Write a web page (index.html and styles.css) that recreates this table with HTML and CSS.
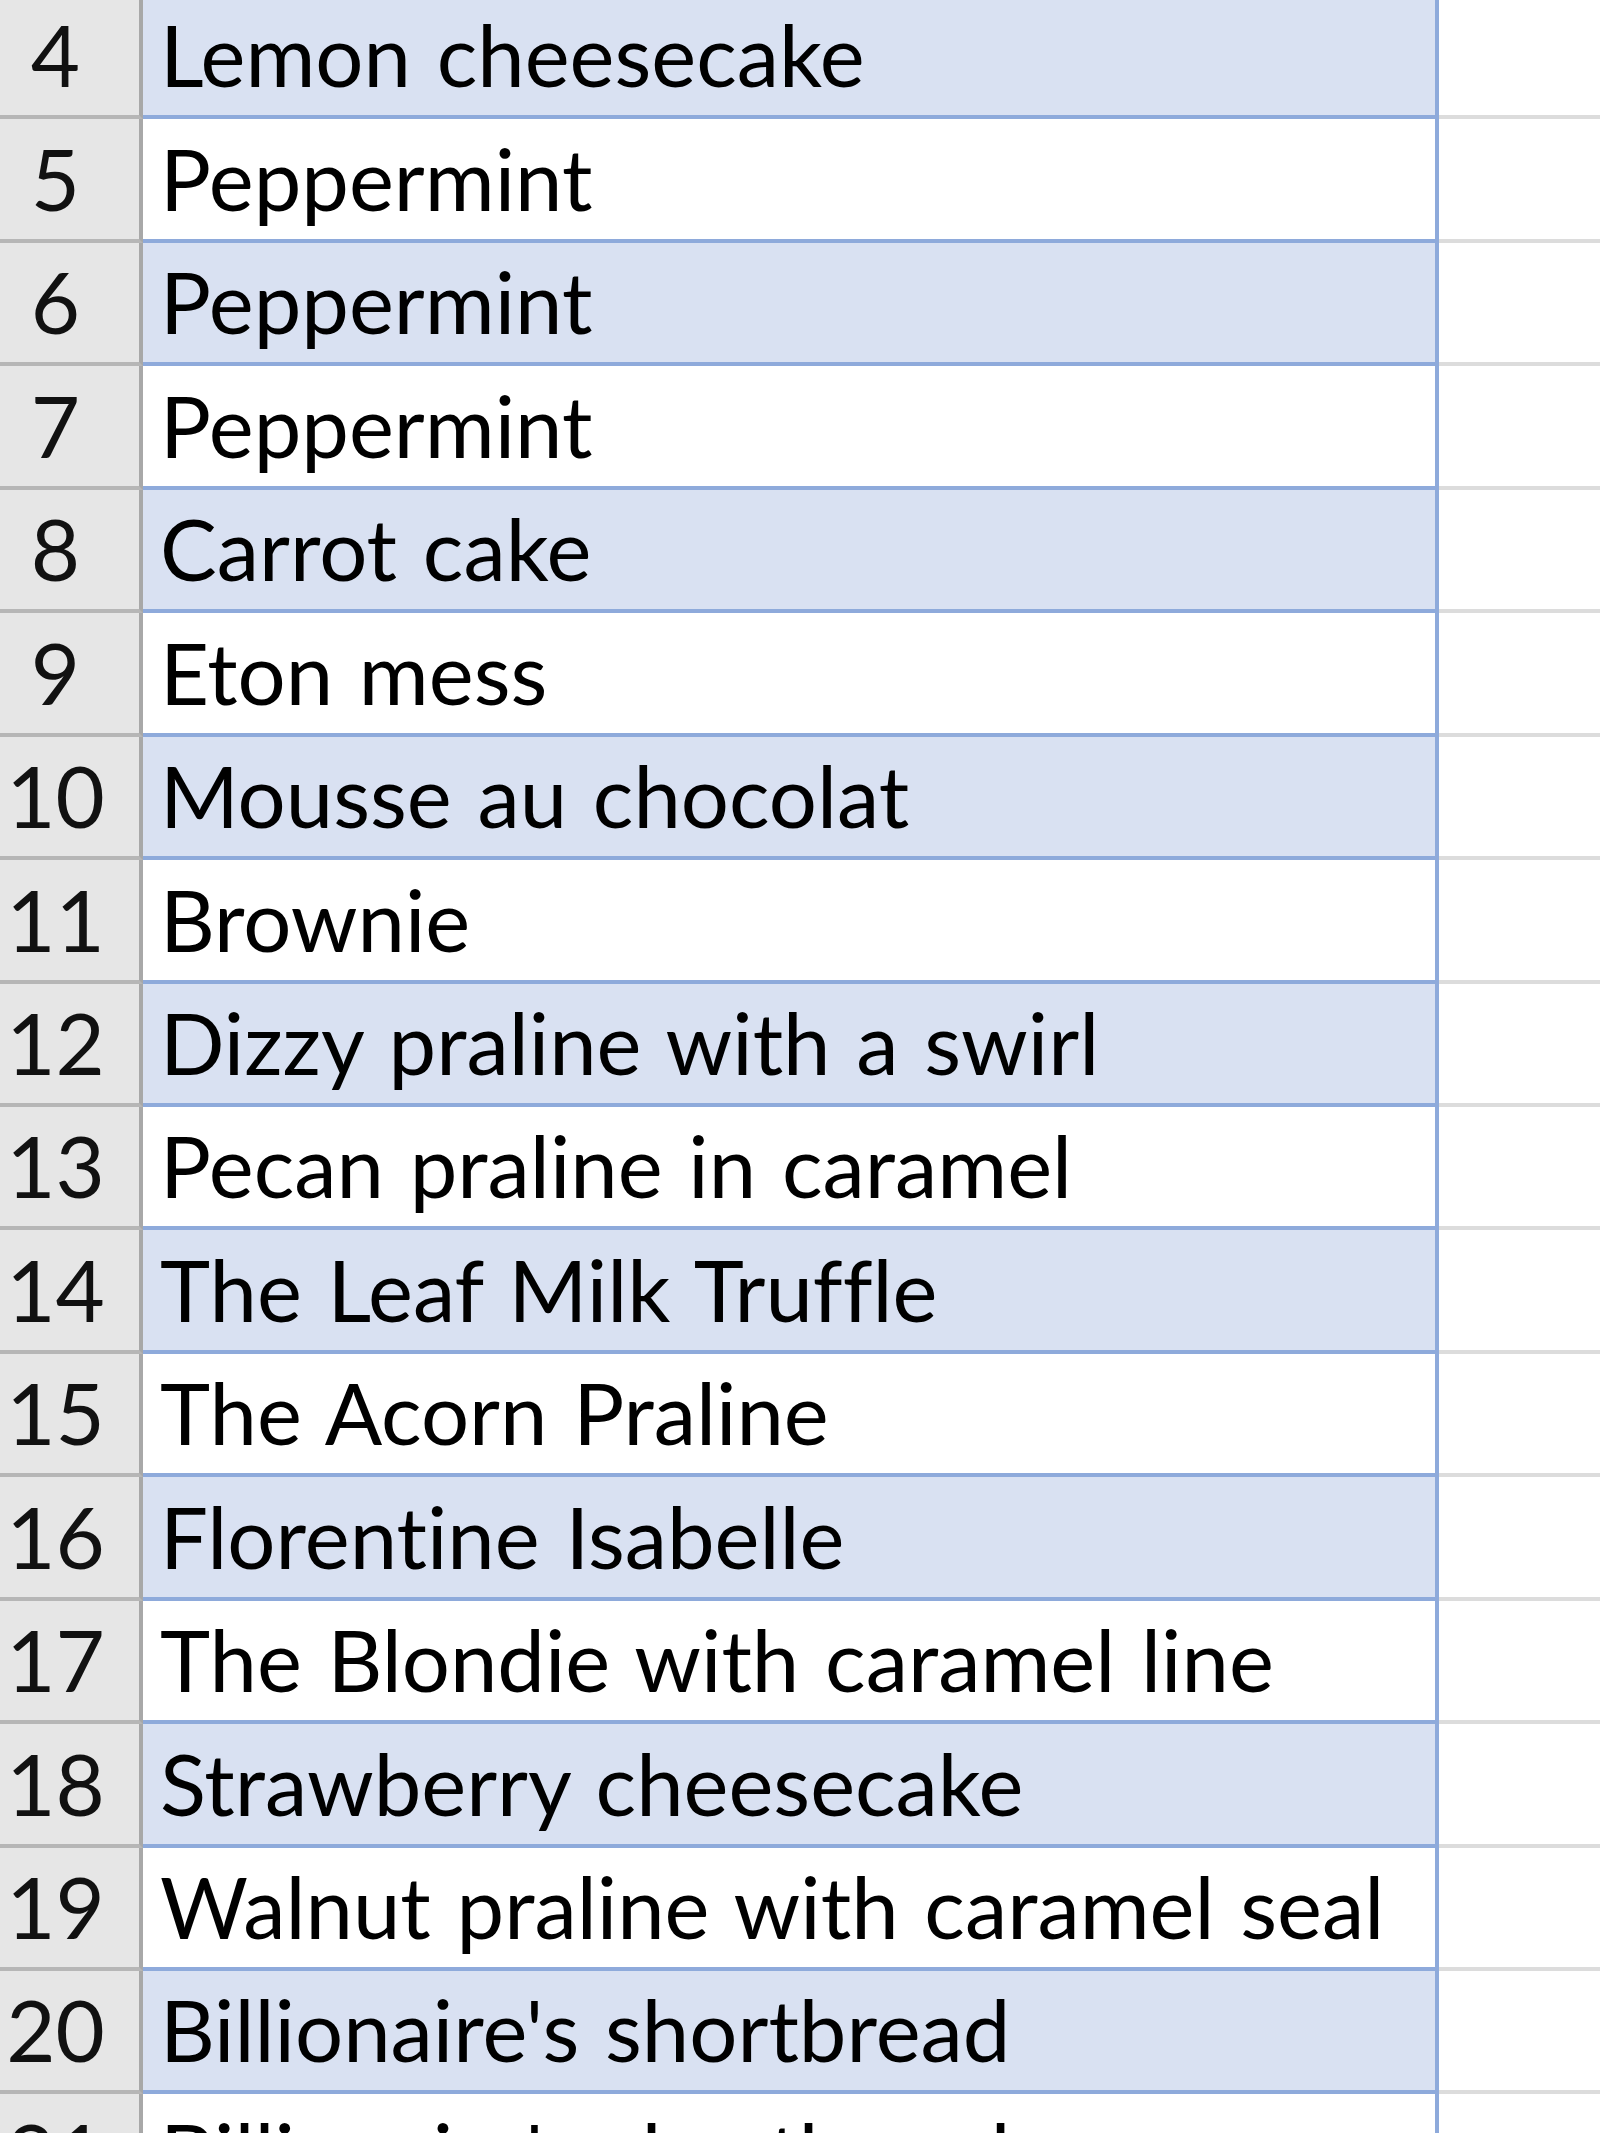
FILE: index.html
```html
<!DOCTYPE html>
<html lang="en">
<head>
<meta charset="utf-8">
<title>Desserts</title>
<link rel="stylesheet" href="styles.css">
</head>
<body>
<div class="sheet">
  <div class="row band"><div class="num">4</div><div class="cell">Lemon cheesecake</div><div class="rest"></div></div>
  <div class="row"><div class="num">5</div><div class="cell">Peppermint</div><div class="rest"></div></div>
  <div class="row band"><div class="num">6</div><div class="cell">Peppermint</div><div class="rest"></div></div>
  <div class="row"><div class="num">7</div><div class="cell">Peppermint</div><div class="rest"></div></div>
  <div class="row band"><div class="num">8</div><div class="cell">Carrot cake</div><div class="rest"></div></div>
  <div class="row"><div class="num">9</div><div class="cell">Eton mess</div><div class="rest"></div></div>
  <div class="row band"><div class="num">10</div><div class="cell">Mousse au chocolat</div><div class="rest"></div></div>
  <div class="row"><div class="num">11</div><div class="cell">Brownie</div><div class="rest"></div></div>
  <div class="row band"><div class="num">12</div><div class="cell">Dizzy praline with a swirl</div><div class="rest"></div></div>
  <div class="row"><div class="num">13</div><div class="cell">Pecan praline in caramel</div><div class="rest"></div></div>
  <div class="row band"><div class="num">14</div><div class="cell">The Leaf Milk Truffle</div><div class="rest"></div></div>
  <div class="row"><div class="num">15</div><div class="cell">The Acorn Praline</div><div class="rest"></div></div>
  <div class="row band"><div class="num">16</div><div class="cell">Florentine Isabelle</div><div class="rest"></div></div>
  <div class="row"><div class="num">17</div><div class="cell">The Blondie with caramel line</div><div class="rest"></div></div>
  <div class="row band"><div class="num">18</div><div class="cell">Strawberry cheesecake</div><div class="rest"></div></div>
  <div class="row"><div class="num">19</div><div class="cell">Walnut praline with caramel seal</div><div class="rest"></div></div>
  <div class="row band"><div class="num">20</div><div class="cell">Billionaire's shortbread</div><div class="rest"></div></div>
  <div class="row"><div class="num">21</div><div class="cell">Billionaire's shortbread</div><div class="rest"></div></div>
</div>
</body>
</html>
```

FILE: styles.css
```css
html, body {
  margin: 0;
  padding: 0;
  height: 2133px;
  overflow: hidden;
  background: #ffffff;
}

.sheet {
  margin-top: -4px;
  font-family: "Lato", "Liberation Sans", sans-serif;
  font-size: 85px;
  line-height: 1;
  color: #000000;
  font-variant-ligatures: none;
  font-feature-settings: "liga" 0, "clig" 0;
}

.row {
  display: grid;
  grid-template-columns: 143px 1296px 1fr;
  height: 123.44px;
  box-sizing: border-box;
}

.num,
.cell,
.rest {
  box-sizing: border-box;
  display: flex;
  align-items: flex-end;
  padding-bottom: 18px;
  white-space: nowrap;
  overflow: hidden;
}

.num {
  background: #e6e6e6;
  border-right: 4px solid #a8a8a8;
  border-bottom: 4px solid #b6b6b6;
  justify-content: center;
  padding-right: 28px;
  color: #111111;
}

.cell {
  background: #ffffff;
  border-right: 4px solid #8eaadb;
  border-bottom: 4px solid #8eaadb;
  padding-left: 17px;
  word-spacing: 4px;
}

.row.band .cell {
  background: #d9e1f2;
}

.rest {
  border-bottom: 4px solid #dcdcdc;
}
```
